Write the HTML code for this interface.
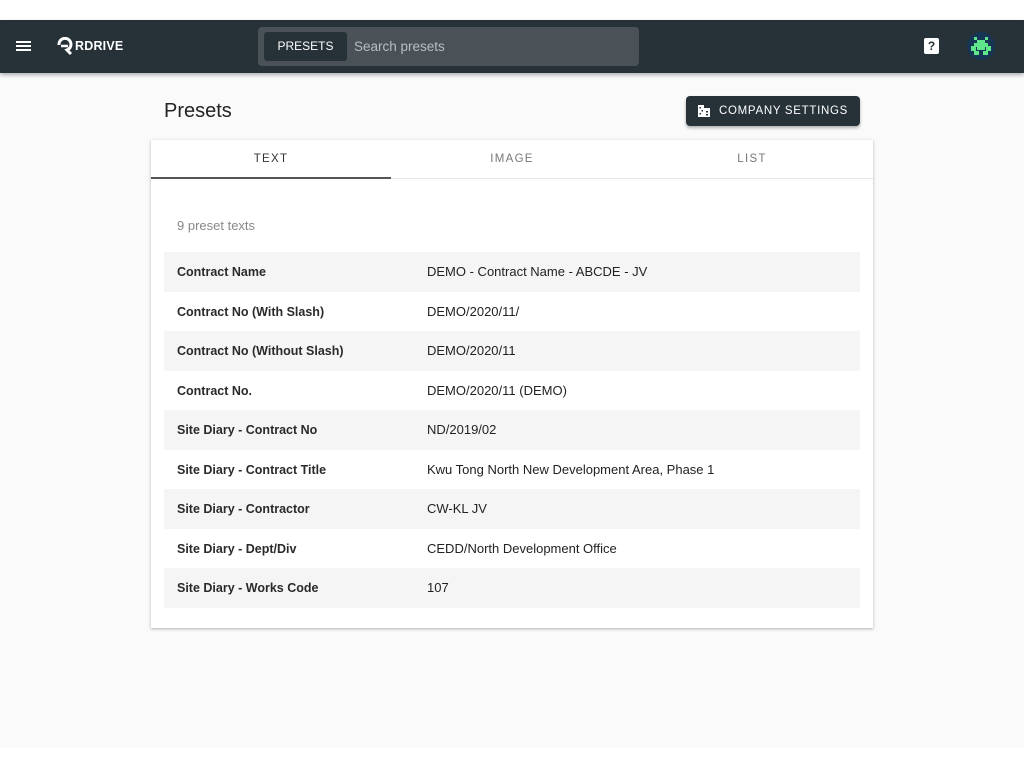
<!DOCTYPE html>
<html><head><style>
*{margin:0;padding:0;box-sizing:border-box}
body{width:1024px;height:768px;background:#fff;font-family:"Liberation Sans",sans-serif;position:relative;overflow:hidden}
.bg{position:absolute;left:0;top:20px;width:1024px;height:728px;background:#fafafa}
.hdr{position:absolute;left:0;top:20px;width:1024px;height:53px;background:#263238;box-shadow:0 2px 4px rgba(0,0,0,.3)}
.ham{position:absolute;left:16px;top:21px;width:15px;height:2px;background:#fff;box-shadow:0 4px 0 #fff,0 8px 0 #fff}
.logo{position:absolute;left:75px;top:19px;color:#fff;font-weight:bold;font-size:12.5px;letter-spacing:.2px}
.search{position:absolute;left:258px;top:7px;width:381px;height:39px;background:#4a5257;border-radius:4px}
.pbtn{position:absolute;left:6px;top:5px;width:83px;height:29px;background:#263238;border-radius:3px;color:#fff;font-size:12px;text-align:center;line-height:29px}
.ph{position:absolute;left:96px;top:12px;color:#b8bdc0;font-size:13.5px}
.help{position:absolute;left:924px;top:18px;width:15px;height:16px;background:#fff;border-radius:2px;color:#263238;font-weight:bold;font-size:12px;text-align:center;line-height:16px}
.av{position:absolute;left:967px;top:12px;width:28px;height:28px;border-radius:50%;background:#173554;overflow:hidden}
h1{position:absolute;left:164px;top:100px;font-weight:normal;font-size:20px;color:#222}
.cs{position:absolute;left:686px;top:96px;width:174px;height:30px;background:#263238;border-radius:4px;color:#fff;font-size:11.5px;letter-spacing:.7px;line-height:30px;padding-left:33px;box-shadow:0 2px 3px rgba(0,0,0,.3);white-space:nowrap}
.card{position:absolute;left:151px;top:140px;width:722px;height:488px;background:#fff;box-shadow:0 1px 3px rgba(0,0,0,.3)}
.tab{position:absolute;top:0;width:240px;height:39px;text-align:center;line-height:39px;font-size:11.5px;letter-spacing:1.3px;color:#777}
.tabline{position:absolute;left:0;top:38px;width:722px;height:1px;background:#e6e6e6}
.ind{position:absolute;left:0;top:37px;width:240px;height:2px;background:#555}
.cnt{position:absolute;left:26px;top:78px;font-size:13px;color:#888}
.row{position:absolute;left:13px;width:696px;height:39.5px;font-size:13px;color:#222;line-height:40px}
.row.s{background:#f5f5f5}
.row .k{position:absolute;left:13px;font-weight:bold;font-size:12.5px;color:#2a2a2a}
.row .v{position:absolute;left:263px}
</style></head><body>
<div class="bg"></div>
<div class="hdr">
<div class="ham"></div>
<svg style="position:absolute;left:56px;top:17px" width="18" height="18" viewBox="0 0 18 18"><path d="M3 8 A6 6 0 1 1 11 13 L15 17" fill="none" stroke="#fff" stroke-width="3"/><path d="M5 9 L12 9" stroke="#fff" stroke-width="2.5"/></svg>
<div class="logo">RDRIVE</div>
<div class="search"><div class="pbtn">PRESETS</div><div class="ph">Search presets</div></div>
<div class="help">?</div>
<div class="av"><svg width="28" height="28" viewBox="0 0 28 28" fill="#5fe58a"><rect x="7" y="5" width="3" height="3"/><rect x="18" y="5" width="3" height="3"/><rect x="10" y="8" width="8" height="3"/><rect x="7" y="11" width="14" height="4"/><rect x="4" y="14" width="5" height="5"/><rect x="19" y="14" width="5" height="5"/><rect x="10" y="15" width="8" height="3"/><rect x="7" y="19" width="5" height="4"/><rect x="16" y="19" width="5" height="4"/></svg></div>
</div>
<h1>Presets</h1>
<div class="cs"><svg style="position:absolute;left:12px;top:9px" width="12" height="12" viewBox="0 0 12 12" fill="#fff"><rect x="0" y="0" width="6" height="12"/><rect x="6" y="3" width="6" height="9"/><rect x="1.5" y="2" width="1.5" height="1.5" fill="#263238"/><rect x="3.5" y="5" width="1.5" height="1.5" fill="#263238"/><rect x="1.5" y="8" width="1.5" height="1.5" fill="#263238"/><rect x="8" y="6" width="2" height="1.5" fill="#263238"/><rect x="8" y="9" width="2" height="1.5" fill="#263238"/></svg>COMPANY SETTINGS</div>
<div class="card">
<div class="tab" style="left:0;color:#333">TEXT</div>
<div class="tab" style="left:241px">IMAGE</div>
<div class="tab" style="left:481px">LIST</div>
<div class="tabline"></div><div class="ind"></div>
<div class="cnt">9 preset texts</div>
<div class="row s" style="top:112px"><span class="k">Contract Name</span><span class="v">DEMO - Contract Name - ABCDE - JV</span></div>
<div class="row" style="top:151.5px"><span class="k">Contract No (With Slash)</span><span class="v">DEMO/2020/11/</span></div>
<div class="row s" style="top:191px"><span class="k">Contract No (Without Slash)</span><span class="v">DEMO/2020/11</span></div>
<div class="row" style="top:230.5px"><span class="k">Contract No.</span><span class="v">DEMO/2020/11 (DEMO)</span></div>
<div class="row s" style="top:270px"><span class="k">Site Diary - Contract No</span><span class="v">ND/2019/02</span></div>
<div class="row" style="top:309.5px"><span class="k">Site Diary - Contract Title</span><span class="v">Kwu Tong North New Development Area, Phase 1</span></div>
<div class="row s" style="top:349px"><span class="k">Site Diary - Contractor</span><span class="v">CW-KL JV</span></div>
<div class="row" style="top:388.5px"><span class="k">Site Diary - Dept/Div</span><span class="v">CEDD/North Development Office</span></div>
<div class="row s" style="top:428px"><span class="k">Site Diary - Works Code</span><span class="v">107</span></div>
</div>
</body></html>
